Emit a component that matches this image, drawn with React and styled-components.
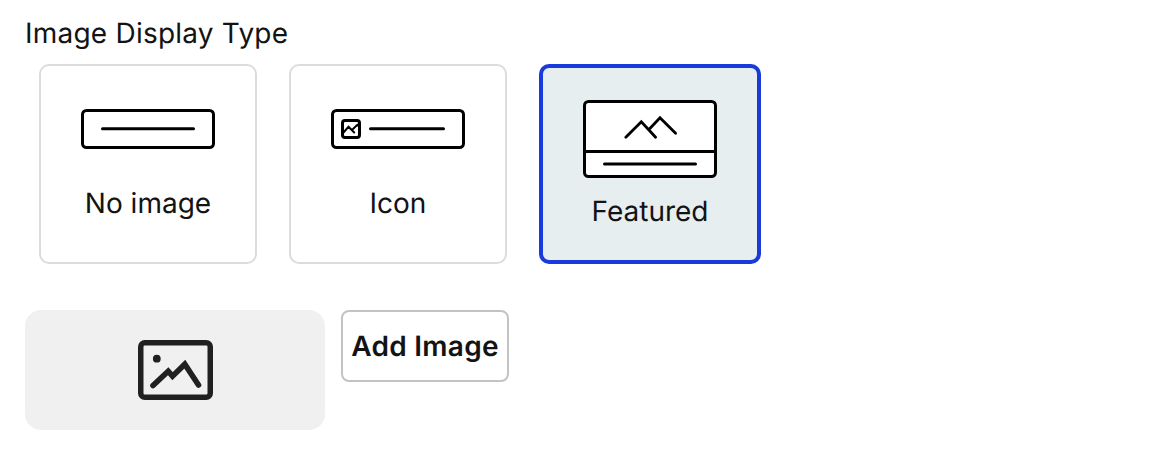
import { useState } from 'react';
import styled, { createGlobalStyle } from 'styled-components';

const GlobalStyle = createGlobalStyle`
  * {
    box-sizing: border-box;
  }
  body {
    margin: 0;
    background: #ffffff;
    color: #131313;
    font-family: Inter, sans-serif;
    font-size: 28px;
    line-height: 34px;
    text-rendering: geometricPrecision;
  }
`;

const Panel = styled.div`
  padding: 16px 25px 0;
`;

const Title = styled.div`
  letter-spacing: 0.22px;
`;

const Options = styled.div`
  display: flex;
  gap: 32px;
  margin: 14px 0 46px 14px;
`;

const Option = styled.button`
  display: flex;
  flex-direction: column;
  align-items: center;
  justify-content: center;
  gap: ${({ $gap }) => $gap}px;
  width: ${({ $active }) => ($active ? 222 : 218)}px;
  height: 200px;
  padding: 0;
  border: ${({ $active }) => ($active ? '4px solid #1a3bdb' : '2px solid #dcdcdc')};
  border-radius: 10px;
  background: ${({ $active }) => ($active ? '#e6eeef' : '#ffffff')};
  color: inherit;
  font: inherit;
  text-rendering: inherit;
`;

const Drawing = styled.svg`
  display: block;
  fill: none;
  stroke: #000000;
  stroke-width: 3;
  stroke-linecap: round;
`;

const ImageRow = styled.div`
  display: flex;
  align-items: flex-start;
  gap: 16px;
`;

const Placeholder = styled.div`
  display: flex;
  align-items: center;
  justify-content: center;
  width: 300px;
  height: 120px;
  border-radius: 16px;
  background: #f0f0f0;
`;

const AddButton = styled.button`
  width: 168px;
  height: 72px;
  padding: 0;
  border: 2px solid #c3c3c3;
  border-radius: 8px;
  background: #ffffff;
  color: inherit;
  font: inherit;
  font-weight: 600;
  letter-spacing: 0.28px;
  text-rendering: inherit;
  white-space: nowrap;
`;

const NoImageDrawing = () => (
  <Drawing width="134" height="40">
    <rect x="1.5" y="1.5" width="131" height="37" rx="4" fill="#fff" />
    <path d="M21.5 19.8H112.5" />
  </Drawing>
);

const IconDrawing = () => (
  <Drawing width="134" height="40">
    <rect x="1.5" y="1.5" width="131" height="37" rx="4" fill="#fff" />
    <rect x="11.5" y="11.5" width="17" height="17" rx="2.5" />
    <path
      d="M12.5 23.5L17.5 17.8L23.2 23.5M21 21L26.3 15.8L28.5 18"
      strokeWidth="2"
    />
    <path d="M39.5 19.8H112.5" />
  </Drawing>
);

const FeaturedDrawing = () => (
  <Drawing width="134" height="78">
    <rect x="1.5" y="1.5" width="131" height="75" rx="4" fill="#fff" />
    <path d="M2 51.5H132M21.5 64H112.5" />
    <path
      d="M42.8 37.2L58.3 21.7L72.6 37.2M65.7 29.7L77 17.8L92.6 33.2"
      strokeWidth="2.8"
    />
  </Drawing>
);

const displayTypes = [
  { id: 'none', label: 'No image', gap: 37, Picture: NoImageDrawing },
  { id: 'icon', label: 'Icon', gap: 37, Picture: IconDrawing },
  { id: 'featured', label: 'Featured', gap: 16, Picture: FeaturedDrawing },
];

function App() {
  const [selected, setSelected] = useState('featured');

  return (
    <Panel>
      <GlobalStyle />
      <Title>Image Display Type</Title>
      <Options>
        {displayTypes.map(({ id, label, gap, Picture }) => (
          <Option
            key={id}
            $gap={gap}
            $active={id === selected}
            onClick={() => setSelected(id)}
          >
            <Picture />
            <span>{label}</span>
          </Option>
        ))}
      </Options>
      <ImageRow>
        <Placeholder>
          <svg width="75" height="60" fill="none" stroke="#202020">
            <rect
              x="2.75"
              y="2.75"
              width="69.5"
              height="54.5"
              rx="4"
              strokeWidth="5.5"
            />
            <circle cx="18.8" cy="18.7" r="3.9" fill="#202020" stroke="none" />
            <path
              d="M15 45.5L30.2 31.2L34.5 36.2L46.8 24.2L60.5 45"
              strokeWidth="5.6"
              strokeLinecap="round"
            />
          </svg>
        </Placeholder>
        <AddButton>Add Image</AddButton>
      </ImageRow>
    </Panel>
  );
}

export default App;
